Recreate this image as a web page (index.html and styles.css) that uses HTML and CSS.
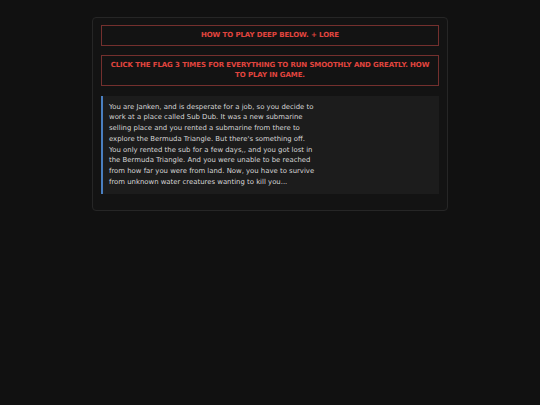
FILE: index.html
```html
<!DOCTYPE html>
<html>
<head>
<meta charset="utf-8">
<link rel="stylesheet" href="styles.css">
</head>
<body>
<div class="page">
  <div class="card">
    <div class="notice">HOW TO PLAY DEEP BELOW. + LORE</div>
    <div class="notice">CLICK THE FLAG 3 TIMES FOR EVERYTHING TO RUN SMOOTHLY AND GREATLY. HOW TO PLAY IN GAME.</div>
    <blockquote class="lore">
      <p>You are Janken, and is desperate for a job, so you decide to work at a place called Sub Dub. It was a new submarine selling place and you rented a submarine from there to explore the Bermuda Triangle. But there's something off. You only rented the sub for a few days,, and you got lost in the Bermuda Triangle. And you were unable to be reached from how far you were from land. Now, you have to survive from unknown water creatures wanting to kill you...</p>
    </blockquote>
  </div>
</div>
</body>
</html>
```

FILE: styles.css
```css
html, body {
  margin: 0;
  padding: 0;
  background: #111111;
  font-family: "DejaVu Sans", Verdana, sans-serif;
}
.page {
  width: 540px;
  height: 405px;
  padding-top: 17px;
  box-sizing: border-box;
}
.card {
  width: 356px;
  margin-left: 92px;
  box-sizing: border-box;
  border: 1px solid #262626;
  border-radius: 4px;
  background: #131313;
  padding: 7px 8px 16px 8px;
  display: flex;
  flex-direction: column;
  gap: 9px;
}
.notice {
  border: 1px solid #74302e;
  color: #e2453f;
  font-weight: bold;
  font-size: 7px;
  letter-spacing: -0.1px;
  line-height: 10.5px;
  text-align: center;
  padding: 4px 6px;
}
.lore {
  margin: 1px 0 0 0;
  background: #1c1c1c;
  border-left: 2px solid #4a7fc0;
  padding: 6px 8px 6px 6px;
}
.lore p {
  margin: 0;
  width: 208px;
  color: #d6d6d6;
  font-size: 6.9px;
  line-height: 10.75px;
}
```
